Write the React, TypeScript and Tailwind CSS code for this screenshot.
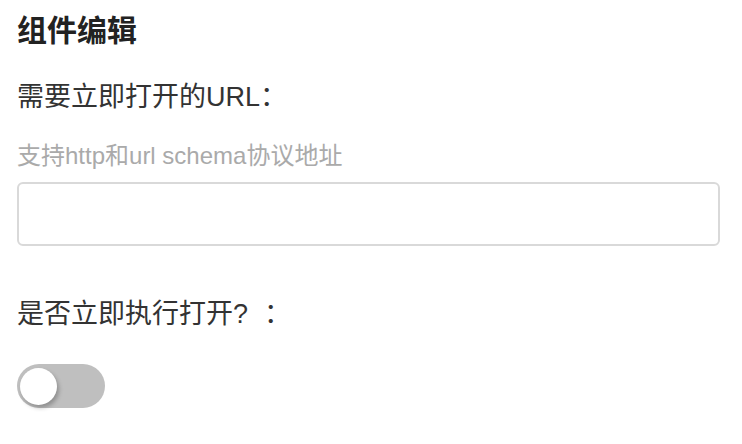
import { useState } from 'react';

const Toggle = ({ on, onChange }: { on: boolean; onChange: (v: boolean) => void }) => (
  <button
    type="button"
    onClick={() => onChange(!on)}
    className={`relative block w-[88px] h-[44px] rounded-full ${on ? 'bg-[#4cd964]' : 'bg-[#bfbfbf]'}`}
  >
    <span
      className={`absolute top-[4px] w-[37px] h-[37px] rounded-full bg-white shadow-[2px_3px_4px_rgba(0,0,0,0.25)] ${on ? 'left-[48px]' : 'left-[3px]'}`}
    />
  </button>
);

const App = () => {
  const [url, setUrl] = useState('');
  const [openNow, setOpenNow] = useState(false);

  return (
    <div className="min-h-screen bg-white pl-[17px] pr-[22px] pt-[16px] font-['Liberation_Sans','Noto_Sans_CJK_SC',sans-serif]">
      <div className="text-[30px] leading-[30px] font-bold text-[#222]">组件编辑</div>

      <div className="mt-[38px] text-[27px] leading-[27px] text-[#333]">需要立即打开的URL：</div>
      <div className="mt-[33px] text-[24px] leading-[24px] text-[#aaa]">支持http和url schema协议地址</div>
      <input
        value={url}
        onChange={(e) => setUrl(e.target.value)}
        className="mt-[14px] block w-full h-[64px] rounded-[6px] border-2 border-[#d9d9d9] px-3 text-[26px] text-[#333] outline-none"
      />

      <div className="mt-[55px] text-[27px] leading-[27px] text-[#333]">
        是否立即执行打开?<span className="ml-[16px]">：</span>
      </div>
      <div className="mt-[36px]">
        <Toggle on={openNow} onChange={setOpenNow} />
      </div>
    </div>
  );
};

export default App;
